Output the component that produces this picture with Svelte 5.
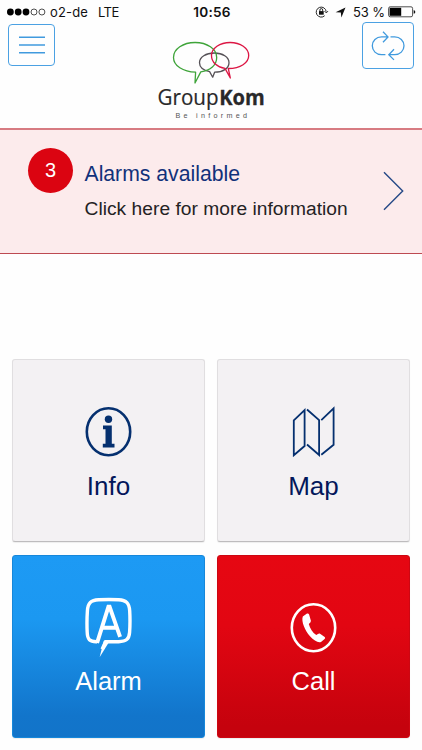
<script>
  const alarms = 3;
</script>

<main>
  <div class="status">
    <div class="carrier">
      <svg width="40" height="10" viewBox="0 0 40 10">
        <g fill="#000"><circle cx="4.4" cy="5" r="3.4" /><circle cx="12.2" cy="5" r="3.4" /><circle cx="20" cy="5" r="3.4" /></g>
        <g fill="none" stroke="#222" stroke-width=".8"><circle cx="28" cy="5" r="3" /><circle cx="35.9" cy="5" r="3" /></g>
      </svg>
      <span class="name">o2-de</span><span class="net">LTE</span>
    </div>
    <b>10:56</b>
    <div class="system">
      <svg width="14" height="12" viewBox="0 0 14 12" fill="none" stroke="#111">
        <path d="M11.2 5.6A5 5 0 1 0 9.7 9.7M9.5 5.1l1.8 1.8 1.7-1.8" stroke-width=".9" />
        <rect x="4" y="5.1" width="4.7" height="3.6" fill="#111" stroke="none" />
        <path d="M4.9 5.3V4a1.4 1.4 0 0 1 2.8 0v1.3" stroke-width=".9" />
      </svg>
      <svg class="nav" width="11" height="11" viewBox="0 0 11 11"><path d="M10.5.6L6.4 10.4 5.8 5.600.6 5.200z" fill="#111" /></svg>
      <span>53 %</span>
      <svg class="battery" width="28" height="12" viewBox="0 0 28 12">
        <rect x=".6" y=".8" width="24" height="10" rx="1.6" fill="none" stroke="#222" stroke-width=".8" />
        <rect x="1.6" y="1.8" width="11.6" height="8" fill="#000" />
        <path d="M25.7 4v3.8q1.6-.5 1.6-1.9T25.7 4z" fill="#111" />
      </svg>
    </div>
  </div>

  <header>
    <button class="menu" aria-label="Menu">
      <svg width="28" height="20" viewBox="0 0 28 20" stroke="#409ade" stroke-width="1.4"><path d="M1 2.2h26M1 10h26M1 17.8h26" /></svg>
    </button>
    <svg class="logo" width="112" height="84" viewBox="155 38 112 84">
      <g fill="none" stroke-width="1.3" stroke-linejoin="round">
        <path stroke="#555156" d="M209.6 71.6C203.3 70.2 199.5 67 199.5 62.7C199.5 57 206 53 214.3 53S229 57 229 62.7S222.8 72.2 214.6 72.2L212.7 77.2Z" />
        <path stroke="#3fa43a" d="M195.6 72.2C183 71.8 173.5 65.7 173.5 57.4C173.5 49.1 183 42.5 195.1 42.5S216.7 49.1 216.7 57.4C216.7 65 210.5 70.5 200.8 71.9L195 83Z" />
        <path stroke="#dc1644" d="M225 68.4C217 67.2 211.5 62.3 211.5 55.5C211.5 48.2 219.8 42.5 230.1 42.5S248.7 48.2 248.7 55.5S240.5 68.5 228.3 68.5L230.3 78Z" />
      </g>
      <text x="157.5" y="104.8" class="brand" textLength="61" lengthAdjust="spacingAndGlyphs">Group</text>
      <text x="219.200" y="104.800" class="brand strong" textLength="45.500" lengthAdjust="spacingAndGlyphs">Kom</text>
      <text x="175.500" y="118" class="tag" textLength="71.500">Be informed</text>
    </svg>
    <button class="sync" aria-label="Refresh">
      <svg width="34" height="30" viewBox="0 0 34 30" fill="none" stroke="#409ade" stroke-width="1.3">
        <path d="M14.4 23.7H10.5C5.2 23.7 1.3 19.8 1.3 14.8S5.2 5.9 10.5 5.9H16.5M12 .8L17 5.900 12 11.200" />
        <path d="M19.500 5.900H23.700C29 5.900 33 9.800 33 14.800S29 23.700 23.700 23.700H17.800M23 18.200L17.800 23.700 23 28.900" />
      </svg>
    </button>
  </header>

  <section class="notice">
    <div class="count">{alarms}</div>
    <div class="message">
      <div class="title">Alarms available</div>
      <div class="detail">Click here for more information</div>
    </div>
    <svg width="21" height="40" viewBox="0 0 21 40" fill="none" stroke="#254886" stroke-width="1.4"><path d="M1 1.3L19.700 20 1 38.700" /></svg>
  </section>

  <section class="tiles">
    <div class="tile">
      <svg width="48" height="52" viewBox="0.5 0.3 48 52">
        <ellipse cx="24" cy="26" rx="21.7" ry="23.5" fill="none" stroke="#05306f" stroke-width="2.6" />
        <circle cx="24" cy="13.5" r="3.7" fill="#05306f" />
        <path fill="#05306f" d="M18.5 19.7H27.3V38H30V41.7H18.3V38H21V23.5H18.5z" />
      </svg>
      <span>Info</span>
    </div>
    <div class="tile">
      <svg width="48" height="52" viewBox="0.7 0.3 48 52" fill="none" stroke="#05306f" stroke-width="1.8">
        <path d="M4.5 14.7L15.3 4.3V40.3L4.500 49.500zM17.700 3.800L29.800 14.500V49.300L17.700 38.800M32 14.500L44.300 2.700V39L32 49" />
      </svg>
      <span>Map</span>
    </div>
    <div class="tile alarm">
      <svg width="48" height="62" viewBox="0.4 -0.3 48 62" fill="none" stroke="#fff">
        <path d="M12.5 44.4C5 44.7 2.8 42 2.6 35C2.3 29 2.3 20.5 2.8 13.5C3.3 5.5 6.2 2.9 14 2.5C21 2.1 28 2.1 34 2.5C42 2.9 44.6 6 45.1 13.5C45.5 20.5 45.5 28 45 35C44.5 42 41.5 44.1 34 44.4H21L17.5 52" stroke-width="3.400" />
        <path d="M12.500 45.500L23.800 9.500H25L35.500 39.600M18.500 30.500H32" stroke-width="3.900" />
        <path d="M19.200 43.500L15 60 24 45.500z" fill="#fff" stroke="none" />
      </svg>
      <span>Alarm</span>
    </div>
    <div class="tile call">
      <svg width="48" height="52" viewBox="0.5 0.3 48 52">
        <ellipse cx="24" cy="26" rx="21.7" ry="23.5" fill="none" stroke="#fff" stroke-width="2.6" />
        <path fill="#fff" d="M13.3 14.8L17.5 11.8Q19 11.3 19.6 12.8L21.4 19Q21.7 20.4 19.3 22.2C20.5 27 23 30.5 26.8 33.4Q29 31.3 30.2 31.8L35.2 35.3Q36.2 36.2 35.1 37.4L31.5 40.2C28.5 41.4 24.5 38.8 20.5 34.6C15.5 29 11.5 19.6 13.3 14.8z" />
      </svg>
      <span>Call</span>
    </div>
  </section>
</main>

<style>
  :global(body) { margin: 0; background: #fff; }
  main {
    width: 422px; height: 750px; overflow: hidden;
    display: flex; flex-direction: column;
    font-family: "Liberation Sans", Arial, sans-serif; background: #fefefe;
  }
  svg { display: block; flex: none; }
  .status {
    height: 24px; box-sizing: border-box; padding: 0 6px;
    display: grid; grid-template-columns: 1fr auto 1fr; align-items: center;
    font: 13px/24px Inter, sans-serif; color: #111;
  }
  .status b { font-weight: 600; font-size: 13.6px; letter-spacing: .2px; margin-left: 2px; }
  .carrier, .system { display: flex; align-items: center; }
  .name { margin-left: 4px; letter-spacing: .15px; }
  .net { margin-left: 10px; letter-spacing: -.5px; }
  .system { justify-content: flex-end; }
  .system span { margin-left: 7px; white-space: nowrap; letter-spacing: -.1px; }
  .nav { margin-left: 6px; }
  .battery { margin-left: 3px; }
  header { height: 104px; display: flex; align-items: flex-start; justify-content: space-between; padding: 0 8px; }
  button {
    box-sizing: border-box; padding: 0; background: transparent;
    border: 1px solid #4ba1e3; border-radius: 4px;
    display: flex; align-items: center; justify-content: center;
  }
  .menu { width: 47px; height: 42px; }
  .sync { width: 52px; height: 47px; margin-top: -2px; }
  .logo { margin: 14px 0 0 5px; }
  .brand { font: 21.5px "Open Sans", sans-serif; fill: #292829; stroke: #292829; stroke-width: .2px; }
  .strong { font-weight: 700; stroke-width: .3px; }
  .tag { font: 7.2px "Liberation Sans", sans-serif; fill: #555; }
  .notice {
    box-sizing: border-box; height: 126px; padding: 0 18px 0 28px;
    display: flex; align-items: flex-start;
    background: #fcebec; border-top: 2px solid #d77b82; border-bottom: 1px solid #bd4a51;
  }
  .count {
    width: 45px; height: 45px; margin-top: 18px; border-radius: 50%;
    background: #db0411; color: #fff; text-align: center; font-size: 20px; line-height: 45px;
  }
  .message { flex: 1; margin: 31px 0 0 11.5px; white-space: nowrap; }
  .title { font-size: 21.2px; line-height: 26px; color: #11317a; }
  .detail { margin-top: 9px; font-size: 19.2px; line-height: 26px; letter-spacing: .03px; color: #242224; }
  .notice > svg { margin-top: 41px; }
  .tiles {
    margin: 105px 12px 0; display: grid; grid-template-columns: 193px 193px;
    grid-auto-rows: 183px; gap: 13px 12px;
  }
  .tile {
    box-sizing: border-box; padding-top: 46px; border-radius: 3px;
    display: flex; flex-direction: column; align-items: center;
    background: #f3f1f3; border: 1px solid #e0dee0; border-bottom-color: #bebcbe;
    box-shadow: 0 1px 1px #eee; color: #03175a;
  }
  .tile span { font-size: 26px; line-height: 30px; margin-top: 13px; }
  .tile.alarm { padding-top: 41px; background: linear-gradient(#1d9af4 0%, #1b98f1 35%, #1275cb 88%, #1274c9); border-color: #1687da; color: #fff; }
  .tile.call { padding-top: 46px; background: linear-gradient(#e60712 0%, #e20612 38%, #c5020d 94%); border-color: #cc0712; color: #fff; }
  .tile.alarm span { margin-top: 7px; font-size: 25.5px; }
  .tile.call span { margin-top: 12px; font-size: 25.5px; }
</style>
